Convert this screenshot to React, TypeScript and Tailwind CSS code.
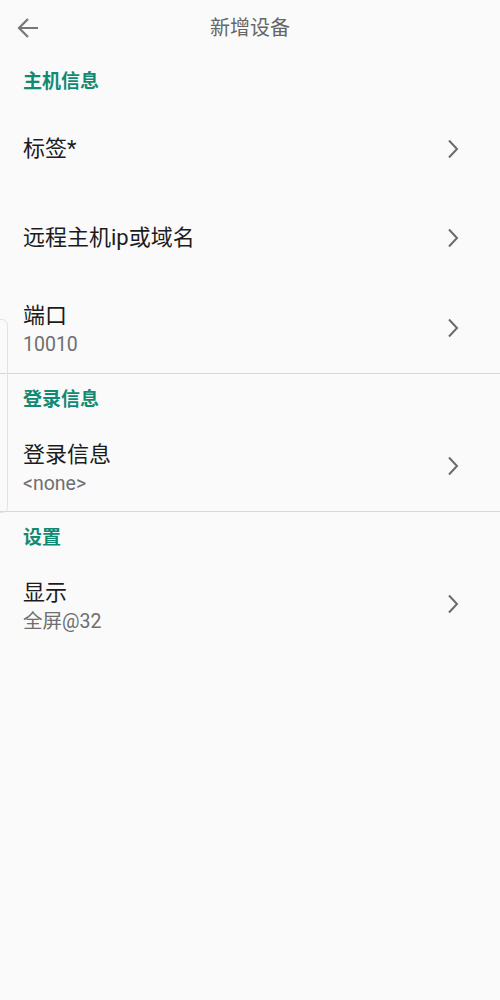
import React from "react";

const font = { fontFamily: 'Roboto, "Noto Sans CJK SC", "Noto Sans", sans-serif' };

function Chevron({ raised }: { raised?: boolean }) {
  return (
    <svg
      width="12"
      height="20"
      viewBox="0 0 12 20"
      className={raised ? "shrink-0 mb-[6px]" : "shrink-0"}
    >
      <path d="M2 1.5 L10 10 L2 18.5" fill="none" stroke="#6b6b6b" strokeWidth="2" />
    </svg>
  );
}

function Section({ title }: { title: string }) {
  return (
    <div className="h-[48px] pt-[2px] flex items-center px-[23px]">
      <span className="text-[19px] font-bold text-[#118a73] leading-none">{title}</span>
    </div>
  );
}

function Row({ title, sub, tall }: { title: string; sub?: string; tall?: boolean }) {
  const cls = tall
    ? "h-[91px] pt-[6px] flex items-center pl-[23px] pr-[41px]"
    : sub
    ? "h-[89px] pt-[5px] flex items-center pl-[23px] pr-[41px]"
    : "h-[89px] pt-[1px] flex items-center pl-[23px] pr-[41px]";
  return (
    <div className={cls}>
      <div className="flex-1 flex flex-col">
        <span className="text-[22px] text-[#1c1c1c] leading-[28px]">{title}</span>
        {sub && <span className="text-[19.5px] text-[#6f6f6f] leading-[29px]">{sub}</span>}
      </div>
      <Chevron raised={!!sub} />
    </div>
  );
}

export default function App() {
  return (
    <div className="relative w-[500px] h-[1000px] bg-[#fafafa] overflow-hidden" style={font}>
      <div className="h-[56px] flex items-center relative">
        <svg width="24" height="24" viewBox="0 0 24 24" className="absolute left-[16px] top-[16px]">
          <path d="M22 12 H3 M12 3 L3 12 L12 21" fill="none" stroke="#777" strokeWidth="2.2" />
        </svg>
        <div className="flex-1 text-center text-[20px] text-[#666] leading-none">新增设备</div>
      </div>
      <Section title="主机信息" />
      <Row title="标签*" />
      <Row title="远程主机ip或域名" />
      <Row title="端口" sub="10010" tall />
      <div className="h-px bg-[#d8d8d8]" />
      <Section title="登录信息" />
      <Row title="登录信息" sub="<none>" />
      <div className="h-px bg-[#d8d8d8]" />
      <Section title="设置" />
      <Row title="显示" sub="全屏@32" />
      <div className="absolute left-[-6px] top-[319px] w-[14px] h-[194px] rounded-[6px] border border-[#e2e2e2]" />
    </div>
  );
}
